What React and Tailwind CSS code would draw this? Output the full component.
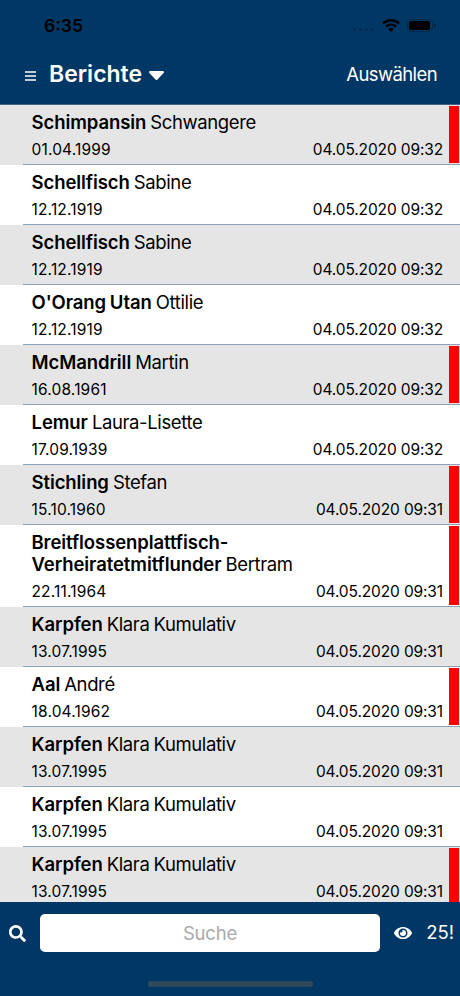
import { FaEye, FaSearch } from "react-icons/fa";

const reports = [
  { lastName: "Schimpansin", firstName: "Schwangere", birthday: "01.04.1999", date: "04.05.2020 09:32", marked: true },
  { lastName: "Schellfisch", firstName: "Sabine", birthday: "12.12.1919", date: "04.05.2020 09:32" },
  { lastName: "Schellfisch", firstName: "Sabine", birthday: "12.12.1919", date: "04.05.2020 09:32" },
  { lastName: "O'Orang Utan", firstName: "Ottilie", birthday: "12.12.1919", date: "04.05.2020 09:32" },
  { lastName: "McMandrill", firstName: "Martin", birthday: "16.08.1961", date: "04.05.2020 09:32", marked: true },
  { lastName: "Lemur", firstName: "Laura-Lisette", birthday: "17.09.1939", date: "04.05.2020 09:32" },
  { lastName: "Stichling", firstName: "Stefan", birthday: "15.10.1960", date: "04.05.2020 09:31", marked: true },
  { lastName: "Breitflossenplattfisch-Verheiratetmitflunder", firstName: "Bertram", birthday: "22.11.1964", date: "04.05.2020 09:31", marked: true },
  { lastName: "Karpfen", firstName: "Klara Kumulativ", birthday: "13.07.1995", date: "04.05.2020 09:31" },
  { lastName: "Aal", firstName: "André", birthday: "18.04.1962", date: "04.05.2020 09:31", marked: true },
  { lastName: "Karpfen", firstName: "Klara Kumulativ", birthday: "13.07.1995", date: "04.05.2020 09:31" },
  { lastName: "Karpfen", firstName: "Klara Kumulativ", birthday: "13.07.1995", date: "04.05.2020 09:31" },
  { lastName: "Karpfen", firstName: "Klara Kumulativ", birthday: "13.07.1995", date: "04.05.2020 09:31", marked: true },
];

function StatusBar() {
  return (
    <div className="flex h-[50px] items-center justify-between pl-[44px] pr-[24px] text-black">
      <span className="mt-[2px] text-[17.5px] font-semibold leading-[20px]">6:35</span>
      <div className="flex items-center">
        <div className="mr-[8px] mt-[9px] flex gap-[3px]">
          <span className="size-[3px] rounded-full bg-[#022a4f]" />
          <span className="size-[3px] rounded-full bg-[#022a4f]" />
          <span className="size-[3px] rounded-full bg-[#022a4f]" />
          <span className="size-[3px] rounded-full bg-[#022a4f]" />
        </div>
        <svg className="mr-[7px] h-[13px] w-[18px]" viewBox="0 0 18 13" fill="none" stroke="currentColor" strokeWidth="2.4">
          <path d="M.9 4.5a11.6 11.6 0 0 1 16.2 0" />
          <path d="M3.9 7.7a7.3 7.3 0 0 1 10.2 0" />
          <path d="M9 12.9 6.2 10.1a4 4 0 0 1 5.6 0z" fill="currentColor" stroke="none" />
        </svg>
        <svg className="h-[13px] w-[29px]" viewBox="0 0 29 13">
          <rect x=".5" y=".5" width="25" height="12" rx="3.6" fill="none" stroke="#02284b" />
          <rect x="2" y="2" width="21" height="9" rx="2.2" fill="#000" />
          <path d="M27 4.5v4c1-.4 1.6-1.1 1.6-2s-.6-1.6-1.6-2z" fill="#02203c" />
        </svg>
      </div>
    </div>
  );
}

function Header() {
  return (
    <header className="h-[105px] shrink-0 border-b border-[#3f6384] bg-[#003764] text-white">
      <StatusBar />
      <div className="flex h-[48px] items-center justify-between pl-[25px] pr-[23px]">
        <div className="flex items-center">
          <svg className="mt-[3px] h-[10px] w-[11px]" viewBox="0 0 11 10" stroke="currentColor" strokeWidth="1.3">
            <path d="M0 1h11M0 5h11M0 9h11" />
          </svg>
          <h1 className="mb-[1px] ml-[13px] text-[23px] font-semibold leading-[28px]">Berichte</h1>
          <svg className="ml-[7px] mt-[2px] h-[9px] w-[15px]" viewBox="0 0 15 9" fill="currentColor">
            <path d="M1.2 0h12.6c1 0 1.5 1.2.8 1.900L8.500 8.400a1.400 1.400 0 0 1-2 0L.4 1.900C-.3 1.200.2 0 1.200 0z" />
          </svg>
        </div>
        <button className="text-[18.5px] leading-[24px] tracking-[-0.6px]">Auswählen</button>
      </div>
    </header>
  );
}

function ReportRow({ report }) {
  return (
    <li className="flex shrink-0 odd:bg-[#e5e5e5] even:bg-white">
      <div className="w-[23px] shrink-0" />
      <div className="flex flex-1 border-b border-[#8ba2b8] pl-[8.5px]">
        <div className="flex-1 pb-[4px] pt-[6px]">
          <p className="w-[290px] text-[18.5px] leading-[22px] tracking-[-0.38px] [word-spacing:-0.8px]">
            <span className="font-semibold tracking-[-0.08px]">{report.lastName}</span> {report.firstName}
          </p>
          <div className="mt-[7px] flex justify-between text-[15.5px] leading-[20px]">
            <span className="tracking-[0.17px]">{report.birthday}</span>
            <span className="tracking-[-0.13px]">{report.date}</span>
          </div>
        </div>
        <div className="ml-[5.5px] flex w-[11.5px] py-px pr-px">
          {report.marked && <span className="flex-1 bg-[#ff0000]" />}
        </div>
      </div>
    </li>
  );
}

function SearchBar() {
  return (
    <footer className="flex h-[94px] shrink-0 flex-col bg-[#003764] text-white">
      <div className="flex items-center pl-[9px] pr-[6px] pt-[12px]">
        <FaSearch className="size-[17px]" />
        <input
          className="ml-[14px] h-[38px] w-[340px] rounded-[5px] bg-white text-center text-[18.5px] tracking-[-0.2px] text-black placeholder:text-[#aaaaaa]"
          placeholder="Suche"
        />
        <FaEye className="ml-[14px] size-[18px]" />
        <span className="ml-auto text-[18.5px]">25!</span>
      </div>
      <div className="mx-auto mb-[9px] mt-auto h-[6px] w-[165px] rounded-full bg-[#30495d]" />
    </footer>
  );
}

export default function App() {
  return (
    <div className="flex h-[996px] w-[460px] flex-col overflow-hidden bg-white font-['Inter','Liberation_Sans',sans-serif] text-black">
      <Header />
      <ul className="flex min-h-0 flex-1 flex-col overflow-hidden">
        {reports.map((report, index) => (
          <ReportRow key={index} report={report} />
        ))}
      </ul>
      <SearchBar />
    </div>
  );
}
